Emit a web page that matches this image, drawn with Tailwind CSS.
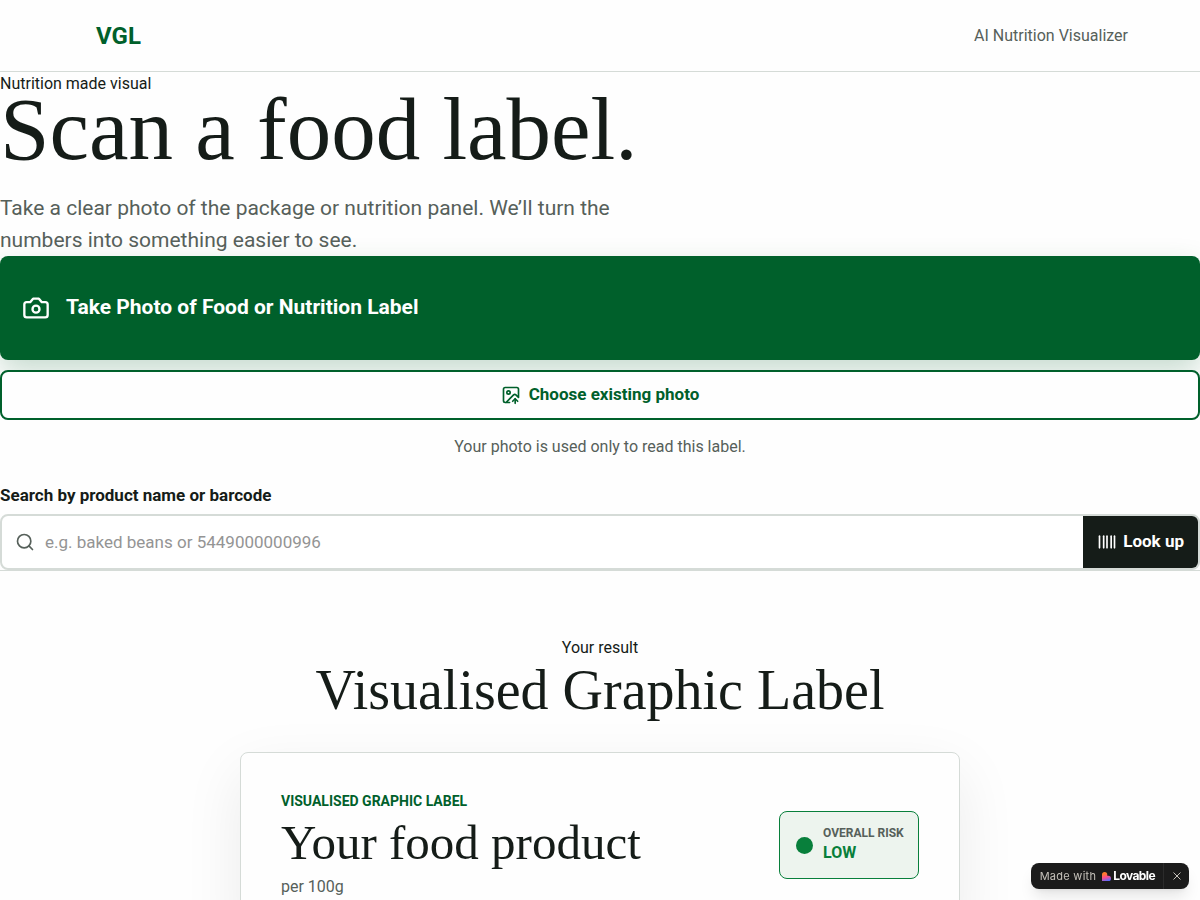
<!DOCTYPE html>
<html lang="en">
<head>
    <meta charset="UTF-8">
    <meta name="viewport" content="width=device-width, initial-scale=1.0">
    <title>VGL - AI Nutrition Visualizer</title>

    <script src="https://cdn.jsdelivr.net/npm/@tailwindcss/browser@4"></script>
</head>
<body class="min-h-screen bg-[#fefefe] font-['Roboto','Noto_Sans',sans-serif] text-base text-[#151c18]">

    <!-- Header -->
    <header class="flex h-18 items-center justify-between border-b border-[#d5dbd7] pl-24 pr-18">
        <a href="#" class="text-2xl font-bold text-[#00602b]">VGL</a>
        <span class="text-[#56605a]">AI Nutrition Visualizer</span>
    </header>

    <main>
        <!-- Scan -->
        <section class="border-b border-[#d5dbd7]">
            <p>Nutrition made visual</p>
            <h1 class="font-['Liberation_Serif',serif] text-[89px] leading-[66px]">Scan a food label.</h1>
            <p class="mt-[30px] max-w-[640px] text-[21px] leading-8 text-[#56605a]">Take a clear photo of the package or nutrition panel. We’ll turn the numbers into something easier to see.</p>

            <button type="button" class="flex h-26 w-full items-center gap-4 rounded-lg bg-[#00602b] px-[22px] text-[21px] font-bold text-white shadow-[0_12px_30px_rgba(0,96,43,0.22)]">
                <svg class="size-7" viewBox="0 0 24 24" fill="none" stroke="currentColor" stroke-width="2" stroke-linecap="round" stroke-linejoin="round">
                    <path d="M14.5 4h-5L7 7H4a2 2 0 0 0-2 2v9a2 2 0 0 0 2 2h16a2 2 0 0 0 2-2V9a2 2 0 0 0-2-2h-3l-2.500-3z"/>
                    <circle cx="12" cy="13" r="3"/>
                </svg>
                Take Photo of Food or Nutrition Label
            </button>

            <button type="button" class="relative mt-2.5 flex h-[50px] w-full items-center justify-center gap-2 rounded-lg border-2 border-[#00602b] bg-[#fefefe] text-[17px] font-bold text-[#00602b]">
                <svg class="size-5" viewBox="0 0 24 24" fill="none" stroke="currentColor" stroke-width="2" stroke-linecap="round" stroke-linejoin="round">
                    <path d="M10.300 21H5a2 2 0 0 1-2-2V5a2 2 0 0 1 2-2h14a2 2 0 0 1 2 2v10l-3.100-3.100a2 2 0 0 0-2.814.014L6 21"/>
                    <path d="m14 19.500 3-3 3 3"/>
                    <path d="M17 22v-5.500"/>
                    <circle cx="9" cy="9" r="2"/>
                </svg>
                Choose existing photo
            </button>
            <p class="mt-[15px] text-center text-[#56605a]">Your photo is used only to read this label.</p>

            <form class="mt-6">
                <label for="query" class="block text-[17px] leading-6 font-bold">Search by product name or barcode</label>
                <div class="mt-[7px] flex h-14 items-center rounded-lg border-2 border-[#d5dbd7] bg-white">
                    <svg class="ml-[13px] size-5 text-[#56605a]" viewBox="0 0 24 24" fill="none" stroke="currentColor" stroke-width="2" stroke-linecap="round" stroke-linejoin="round">
                        <circle cx="11" cy="11" r="8"/>
                        <path d="m21 21-4.300-4.300"/>
                    </svg>
                    <input id="query" type="text" placeholder="e.g. baked beans or 5449000000996" class="h-full min-w-0 flex-1 px-2.5 text-[17px] outline-none placeholder:text-[#949494]">
                    <button type="submit" class="flex h-full items-center gap-1.5 rounded-r-md bg-[#151c18] px-3.5 text-[17px] font-bold text-white">
                        <svg class="size-5" viewBox="0 0 24 24" fill="none" stroke="currentColor" stroke-width="2" stroke-linecap="round" stroke-linejoin="round">
                            <path d="M3 5v14"/>
                            <path d="M8 5v14"/>
                            <path d="M12 5v14"/>
                            <path d="M17 5v14"/>
                            <path d="M21 5v14"/>
                        </svg>
                        Look up
                    </button>
                </div>
            </form>
        </section>

        <!-- Result -->
        <section class="px-6 pt-[65px] pb-16">
            <div class="text-center">
                <p>Your result</p>
                <h2 class="mt-2 font-['Liberation_Serif',serif] text-[56px] leading-11">Visualised Graphic Label</h2>
            </div>

            <article class="mx-auto mt-10 max-w-[720px] rounded-lg border border-[#d5dbd7] bg-[#fefefe] p-10 shadow-[0_20px_60px_rgba(0,0,0,0.08)]">
                <div class="flex items-center justify-between">
                    <div>
                        <p class="text-sm leading-4 font-bold text-[#00602b]">VISUALISED GRAPHIC LABEL</p>
                        <h3 class="mt-4 font-['Liberation_Serif',serif] text-[49px] leading-9">Your food product</h3>
                        <p class="mt-4 leading-5 text-[#56605a]">per 100g</p>
                    </div>
                    <div class="flex h-[68px] w-[140px] items-center gap-2.5 rounded-lg border border-[#087f3b] bg-[#edf4ee] px-4">
                        <span class="size-[17px] shrink-0 rounded-full bg-[#087f3b]"></span>
                        <div class="whitespace-nowrap">
                            <p class="text-xs leading-4 font-bold text-[#56605a]">OVERALL RISK</p>
                            <p class="font-bold text-[#087f3b]">LOW</p>
                        </div>
                    </div>
                </div>
            </article>
        </section>
    </main>

    <!-- Lovable badge -->
    <div class="fixed right-[11px] bottom-[11px] flex h-[26px] items-center rounded-lg bg-[#1b1b1b] font-['Inter',sans-serif] text-[11px] text-[#c5c1ba] shadow-lg">
        <a href="#" class="flex items-center pr-2 pl-[9px]">
            <span class="tracking-wide">Made with</span>
            <svg class="ml-1.5 size-[9px]" viewBox="0 0 24 24">
                <defs>
                    <linearGradient id="heart" x1="0.300" y1="0" x2="0.600" y2="1">
                        <stop offset="0.200" stop-color="#ff7a2f"/>
                        <stop offset="0.550" stop-color="#fe4b8c"/>
                        <stop offset="1" stop-color="#5a6cff"/>
                    </linearGradient>
                </defs>
                <path fill="url(#heart)" d="M7 0a7 7 0 0 1 7 7v3h3a7 7 0 0 1 0 14H0V7a7 7 0 0 1 7-7z"/>
            </svg>
            <span class="ml-0.5 text-xs font-bold tracking-tighter text-white">Lovable</span>
        </a>
        <button type="button" aria-label="Close" class="flex h-full w-[26px] items-center justify-center border-l border-[#2b2b2b]">
            <svg class="size-2" viewBox="0 0 8 8" fill="none" stroke="currentColor" stroke-width="1">
                <path d="M0.500 0.500l7 7M7.500 0.500l-7 7"/>
            </svg>
        </button>
    </div>

</body>
</html>
